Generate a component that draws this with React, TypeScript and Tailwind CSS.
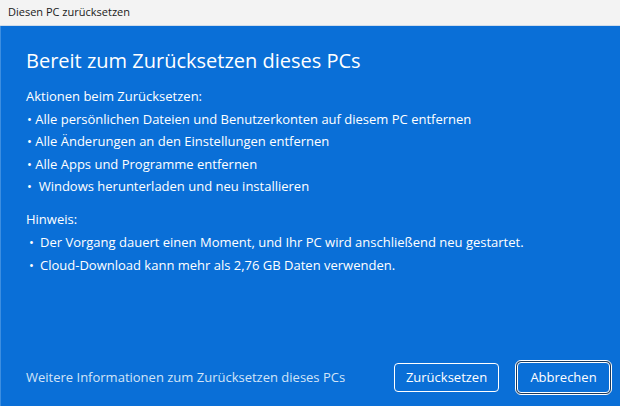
export default function App() {
  const actions = [
    "Alle persönlichen Dateien und Benutzerkonten auf diesem PC entfernen",
    "Alle Änderungen an den Einstellungen entfernen",
    "Alle Apps und Programme entfernen",
    " Windows herunterladen und neu installieren",
  ];
  const notes = [
    "Der Vorgang dauert einen Moment, und Ihr PC wird anschließend neu gestartet.",
    "Cloud-Download kann mehr als 2,76 GB Daten verwenden.",
  ];

  return (
    <div
      className="w-[620px] h-[406px] flex flex-col overflow-hidden"
      style={{ fontFamily: '"Open Sans", "Noto Sans", sans-serif' }}
    >
      {/* Titelleiste */}
      <div className="h-[26px] shrink-0 bg-[#f3f3f3] border-b border-[#cfdcea] flex items-center pl-[8px] text-[11px] text-[#1a1a1a]">
        Diesen PC zurücksetzen
      </div>

      <div className="flex-1 bg-[#0a6fd7] border-l border-[#3d8ee0] flex flex-col text-white">
        <div className="pl-[25px] pt-[21px]">
          <h1 className="text-[20px] leading-[28px] font-normal">Bereit zum Zurücksetzen dieses PCs</h1>

          <div className="mt-[10px] text-[13px] leading-[22.6px]">
            <div>Aktionen beim Zurücksetzen:</div>
            {actions.map((a) => (
              <div key={a} className="whitespace-pre pl-[1px]">
                {"• "}
                {a}
              </div>
            ))}
          </div>

          <div className="mt-[10px] text-[13px] leading-[23px]">
            <div>Hinweis:</div>
            {notes.map((n) => (
              <div key={n} className="flex pl-[3px]">
                <span className="w-[11px]">•</span>
                <span>{n}</span>
              </div>
            ))}
          </div>
        </div>

        <div className="mt-auto flex items-center pl-[25px] pr-[8px] pb-[11px]">
          <span className="text-[13px] text-[#d2e4f7]">Weitere Informationen zum Zurücksetzen dieses PCs</span>
          <button className="ml-auto h-[29px] w-[105px] rounded-[4px] border-[1.5px] border-white text-[13px] text-white">
            Zurücksetzen
          </button>
          <div className="ml-[16px] rounded-[6px] border border-white p-[1px] bg-[#1b3a5c]">
            <button className="h-[31px] w-[93px] rounded-[4px] border border-white bg-[#0a6fd7] text-[13px] text-white">
              Abbrechen
            </button>
          </div>
        </div>
      </div>
    </div>
  );
}
